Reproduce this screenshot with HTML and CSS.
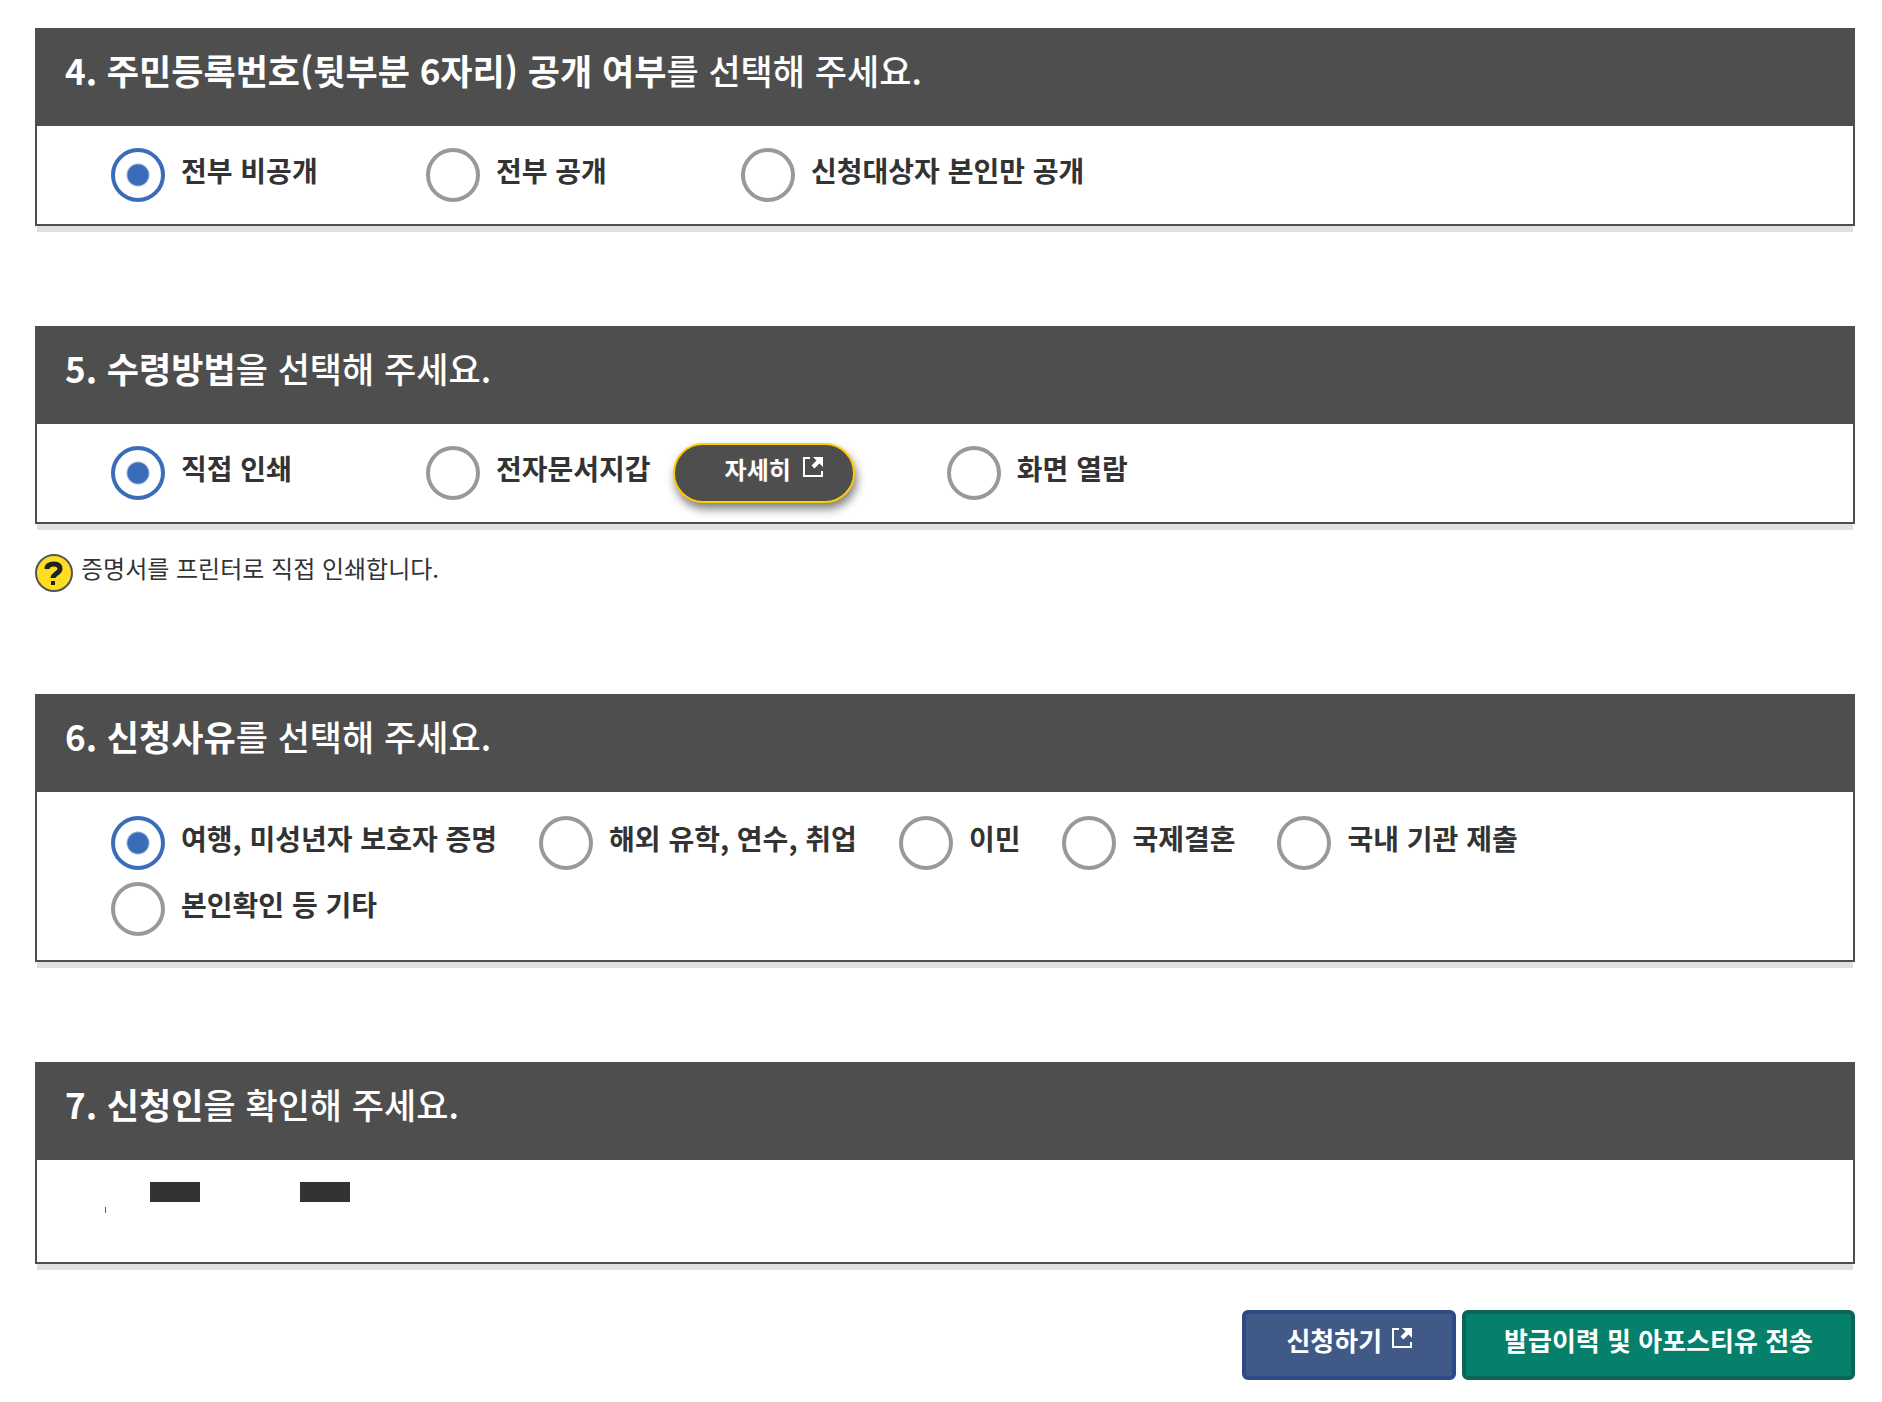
FILE: index.html
```
<!DOCTYPE html>
<html lang="ko">
<head>
<meta charset="utf-8">
<meta name="viewport" content="width=device-width, initial-scale=1">
<title>증명서 발급 신청</title>
<link rel="stylesheet" href="styles.css">
</head>
<body>
<form class="apply">
  <section class="panel" aria-labelledby="t4">
    <h2 class="panel-title" id="t4"><strong>4. 주민등록번호(뒷부분 6자리) 공개 여부</strong>를 선택해 주세요.</h2>
    <div class="options options-wide">
      <label class="option"><input type="radio" name="disclosure" checked><span>전부 비공개</span></label>
      <label class="option"><input type="radio" name="disclosure"><span>전부 공개</span></label>
      <label class="option"><input type="radio" name="disclosure"><span>신청대상자 본인만 공개</span></label>
    </div>
  </section>

  <section class="panel" aria-labelledby="t5">
    <h2 class="panel-title" id="t5"><strong>5. 수령방법</strong>을 선택해 주세요.</h2>
    <div class="options options-wide">
      <label class="option"><input type="radio" name="receive" checked><span>직접 인쇄</span></label>
      <div class="option-group">
        <label class="option-inline"><input type="radio" name="receive"><span>전자문서지갑</span></label>
        <button type="button" class="detail"><span>자세히</span>
          <svg class="open-icon" viewBox="0 0 20 20" aria-hidden="true"><path d="M7 1H1v18h18v-5"/><path class="arrow" d="M18 2l-8 8"/><path class="head" d="M10 0h10v10z"/></svg>
        </button>
      </div>
      <label class="option"><input type="radio" name="receive"><span>화면 열람</span></label>
    </div>
  </section>
  <p class="hint">
    <svg class="hint-icon" viewBox="0 0 38 38" aria-hidden="true"><circle cx="19" cy="19" r="18"/><path d="M12 15c0-4 3-5 7-5s6 2 6 5c0 4-7 5-7 9"/><rect x="16" y="27" width="4" height="4"/></svg>
    <span>증명서를 프린터로 직접 인쇄합니다.</span>
  </p>

  <section class="panel" aria-labelledby="t6">
    <h2 class="panel-title" id="t6"><strong>6. 신청사유</strong>를 선택해 주세요.</h2>
    <div class="options options-list">
      <label class="option"><input type="radio" name="reason" checked><span>여행, 미성년자 보호자 증명</span></label>
      <label class="option"><input type="radio" name="reason"><span>해외 유학, 연수, 취업</span></label>
      <label class="option"><input type="radio" name="reason"><span>이민</span></label>
      <label class="option"><input type="radio" name="reason"><span>국제결혼</span></label>
      <label class="option"><input type="radio" name="reason"><span>국내 기관 제출</span></label>
      <label class="option"><input type="radio" name="reason"><span>본인확인 등 기타</span></label>
    </div>
  </section>

  <section class="panel" aria-labelledby="t7">
    <h2 class="panel-title" id="t7"><strong>7. 신청인</strong>을 확인해 주세요.</h2>
    <div class="applicant">
      <span class="tick"></span>
      <span class="mask"></span>
      <span class="mask"></span>
    </div>
  </section>

  <div class="actions">
    <button type="submit" class="btn btn-blue"><span>신청하기</span>
      <svg class="open-icon" viewBox="0 0 20 20" aria-hidden="true"><path d="M7 1H1v18h18v-5"/><path class="arrow" d="M18 2l-8 8"/><path class="head" d="M10 0h10v10z"/></svg>
    </button>
    <button type="button" class="btn btn-green"><span>발급이력 및 아포스티유 전송</span></button>
  </div>
</form>
</body>
</html>
```
FILE: styles.css
```
* { box-sizing: border-box; }

body {
  margin: 0;
  background: #fff;
  color: #333;
  font-family: "Noto Sans CJK KR", "Noto Sans", sans-serif;
}

button { font-family: inherit; cursor: pointer; }

.apply { padding: 28px 27px 22px 35px; }

.panel {
  margin-bottom: 100px;
  border: 2px solid #4e4e4e;
  box-shadow: 0 8px 0 -2px #e0e0e0;
}

.panel-title {
  margin: 0;
  padding: 12px 28px 28px;
  background: #4e4e4e;
  color: #fff;
  font-size: 35px;
  line-height: 56px;
  font-weight: 500;
}

.panel-title strong { font-weight: 700; }

.options {
  display: flex;
  flex-wrap: wrap;
  gap: 12px 48px;
  padding: 22px 74px;
}

.options-list {
  column-gap: 42px;
  padding-block: 24px;
}

.options-wide .option { min-width: 267px; }

.option,
.option-inline {
  display: flex;
  align-items: center;
  gap: 16px;
  font-size: 28px;
  line-height: 42px;
  font-weight: 700;
}

.option span,
.option-inline span { padding-bottom: 10px; }

.option-group {
  display: flex;
  align-items: center;
  gap: 22px;
  margin: -3px 44px -3px 0;
}

input[type="radio"] {
  appearance: none;
  flex: none;
  width: 54px;
  height: 54px;
  margin: 0;
  border: 4px solid #999;
  border-radius: 50%;
  background: #fff;
}

input[type="radio"]:checked {
  border-color: #3a6cb9;
  background: radial-gradient(circle, #3a6cb9 10px, #fff 12px);
}

.detail {
  display: flex;
  align-items: flex-start;
  gap: 12px;
  height: 60px;
  padding: 8px 30px 0 50px;
  border: 2px solid #fc0;
  border-radius: 30px;
  background: #4e4e4e;
  box-shadow: 2px 6px 10px rgba(0, 0, 0, 0.5);
  color: #fff;
  font-size: 24px;
  line-height: 32px;
  font-weight: 700;
}

.open-icon {
  width: 20px;
  height: 20px;
  margin-top: 4px;
  fill: none;
  stroke: #fff;
  stroke-width: 2;
}

.open-icon .arrow { stroke-width: 4; }
.open-icon .head { fill: #fff; stroke: none; }

.hint {
  display: flex;
  gap: 8px;
  margin: -70px 0 102px;
  font-size: 24px;
  line-height: 28px;
}

.hint-icon { width: 38px; height: 38px; }
.hint-icon circle { fill: #fd2; stroke: #555; stroke-width: 2; }
.hint-icon path { fill: none; stroke: #222; stroke-width: 5; }
.hint-icon rect { fill: #222; }

.applicant {
  display: flex;
  gap: 100px;
  height: 102px;
  padding: 22px 68px;
}

.mask { width: 50px; height: 20px; background: #333; }
.tick { width: 1px; height: 6px; margin: 25px -56px 0 0; background: #36b; }

.actions {
  display: flex;
  justify-content: flex-end;
  gap: 6px;
  margin-top: -54px;
}

.btn {
  display: flex;
  gap: 10px;
  height: 70px;
  padding: 8px 40px 0;
  border: 4px solid;
  border-radius: 6px;
  color: #fff;
  font-size: 26px;
  line-height: 36px;
  font-weight: 700;
}

.btn .open-icon { margin-top: 6px; }
.btn-blue { border-color: #2c4a86; background: #405987; }
.btn-green { padding-inline: 38px; border-color: #0c6658; background: #04806b; }
```
